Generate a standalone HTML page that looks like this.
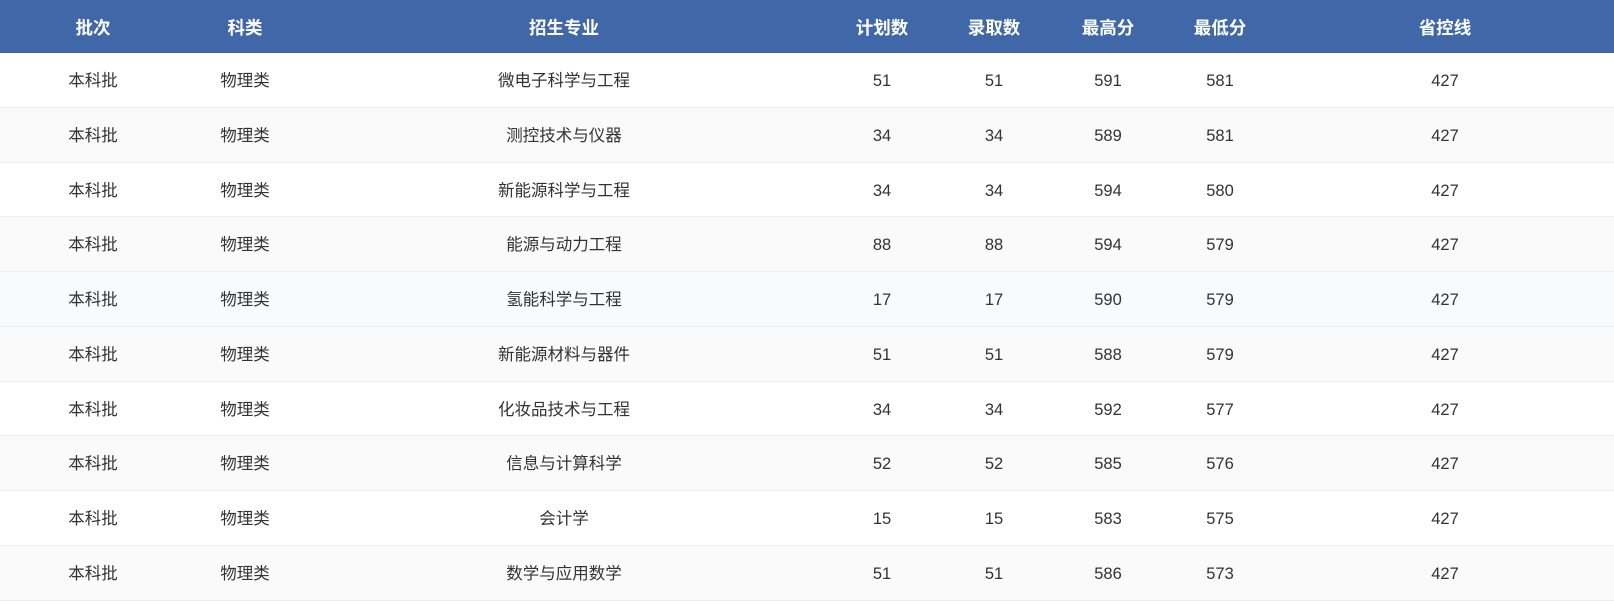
<!DOCTYPE html>
<html><head><meta charset="utf-8"><style>
body{margin:0;width:1614px;height:605px;background:#fff;font-family:"Liberation Sans","Noto Sans CJK SC",sans-serif;overflow:hidden}
.r{position:relative;height:54.77px;box-sizing:border-box;border-bottom:1px solid #ebeef5;color:#333;font-size:16.5px}
.h{height:53px;background:#4068a8;color:#fff;font-weight:bold;font-size:17.5px;border:none}
.r div{position:absolute;top:0;height:100%;line-height:57px;transform:translateX(-50%);white-space:nowrap}
.h div{line-height:56px}
.e{background:#fafafa}
.b{background:#f8fafd}
</style></head><body>
<div class="r h"><div style="left:93px">批次</div><div style="left:245px">科类</div><div style="left:564px">招生专业</div><div style="left:882px">计划数</div><div style="left:994px">录取数</div><div style="left:1108px">最高分</div><div style="left:1220px">最低分</div><div style="left:1445px">省控线</div></div>
<div id="t"></div>
<script>
var d=[["微电子科学与工程",51,51,591,581],["测控技术与仪器",34,34,589,581],["新能源科学与工程",34,34,594,580],["能源与动力工程",88,88,594,579],["氢能科学与工程",17,17,590,579],["新能源材料与器件",51,51,588,579],["化妆品技术与工程",34,34,592,577],["信息与计算科学",52,52,585,576],["会计学",15,15,583,575],["数学与应用数学",51,51,586,573]];
var h="";d.forEach(function(r,i){h+='<div class="r'+(i==4?' b':(i%2?' e':''))+'"><div style="left:93px">本科批</div><div style="left:245px">物理类</div><div style="left:564px">'+r[0]+'</div><div style="left:882px">'+r[1]+'</div><div style="left:994px">'+r[2]+'</div><div style="left:1108px">'+r[3]+'</div><div style="left:1220px">'+r[4]+'</div><div style="left:1445px">427</div></div>'});
document.getElementById("t").innerHTML=h;
</script>
</body></html>
